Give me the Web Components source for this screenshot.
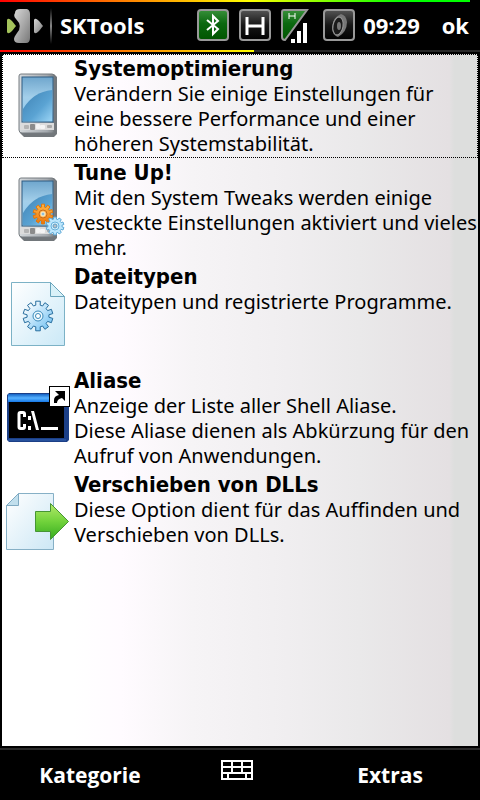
<!DOCTYPE html>
<html lang="de">
<head>
<meta charset="utf-8">
<meta name="viewport" content="width=device-width, initial-scale=1">
<title>SKTools</title>
<style>
html,body{margin:0;height:100%;background:#000}
body{font-family:"Noto Sans",sans-serif}
</style>
</head>
<body>
<sk-app>
  <sk-status slot="top" heading="SKTools" time="09:29"></sk-status>
  <sk-entry icon="pda" selected>
    <span slot="title">Systemoptimierung</span>Verändern Sie einige Einstellungen für<br>eine bessere Performance und einer<br>höheren Systemstabilität.
  </sk-entry>
  <sk-entry icon="tune">
    <span slot="title">Tune Up!</span>Mit den System Tweaks werden einige<br>vesteckte Einstellungen aktiviert und vieles<br>mehr.
  </sk-entry>
  <sk-entry icon="types">
    <span slot="title">Dateitypen</span>Dateitypen und registrierte Programme.
  </sk-entry>
  <sk-entry icon="alias">
    <span slot="title">Aliase</span>Anzeige der Liste aller Shell Aliase.<br>Diese Aliase dienen als Abkürzung für den<br>Aufruf von Anwendungen.
  </sk-entry>
  <sk-entry icon="move">
    <span slot="title">Verschieben von DLLs</span>Diese Option dient für das Auffinden und<br>Verschieben von DLLs.
  </sk-entry>
  <sk-softkeys slot="bottom"><span slot="left">Kategorie</span><span slot="right">Extras</span></sk-softkeys>
</sk-app>
<script>
function gear(cx, cy, outer, inner, teeth) {
  const p = [], step = Math.PI * 2 / teeth;
  for (let i = 0; i < teeth; i++) {
    const a = i * step - Math.PI / 2;
    for (const [r, o] of [[inner, -.32], [outer, -.24], [outer, .24], [inner, .32]])
      p.push((cx + r * Math.cos(a + o * step)).toFixed(1) + ' ' + (cy + r * Math.sin(a + o * step)).toFixed(1));
  }
  return 'M' + p.join('L') + 'Z';
}
const device = dy => `
  <defs>
    <linearGradient id="scr" x1="0" y1="0" x2="0" y2="1"><stop offset="0" stop-color="#6fa6cd"/><stop offset=".45" stop-color="#a3cfea"/><stop offset="1" stop-color="#8ecbf0"/></linearGradient>
    <linearGradient id="wave" x1="0" y1="0" x2="1" y2="1"><stop offset="0" stop-color="#3f82b4"/><stop offset=".6" stop-color="#5aa3d3"/><stop offset="1" stop-color="#9ad4f5"/></linearGradient>
    <linearGradient id="case" x1="0" y1="0" x2="1" y2="0"><stop offset="0" stop-color="#d5d9dc"/><stop offset=".8" stop-color="#a4a9ae"/><stop offset="1" stop-color="#7f8488"/></linearGradient>
    <linearGradient id="og" x1="0" y1="0" x2="0" y2="1"><stop offset="0" stop-color="#ffb84a"/><stop offset="1" stop-color="#ef7408"/></linearGradient>
  </defs>
  <g transform="translate(0 ${dy})">
  <path d="M22 74H54L57 77V134L54 137H24L20 133V76Z" fill="#72777b"/>
  <path d="M21 74H52Q54 74 54 76V131Q54 133 52 133H22Q19 133 19 130V76Q19 74 21 74Z" fill="url(#case)" stroke="#777d81"/>
  <rect x="22" y="77" width="31" height="45" fill="url(#scr)" stroke="#2e5c82"/>
  <path d="M23 109Q33 92 52 90V121H23Z" fill="url(#wave)"/>
  <path d="M20 123H54V130H20Z" fill="#dcdcdc"/>
  <rect x="24" y="125" width="5" height="4" rx="1" fill="#b4b4b4"/><rect x="30" y="124" width="5" height="6" rx="1" fill="#8b8b8b"/><rect x="36" y="124" width="4" height="5" rx="1" fill="#f4f4f4"/><rect x="40" y="125" width="5" height="4" rx="1" fill="#f4f4f4"/><rect x="47" y="125" width="5" height="3" rx="1" fill="#a9a9a9"/>
  </g>`;
const ART = {
  pda: [54, device(0)],
  tune: [158, device(104) + `
    <path d="${gear(43, 214, 10, 7, 10)}" fill="url(#og)" stroke="#dd780f"/><circle cx="43" cy="214" r="4" fill="#ffb95a" stroke="#c96b19"/><circle cx="43" cy="214" r="2" fill="#8fbfda" stroke="#fff0cf"/>
    <path d="${gear(55, 226, 9, 7, 10)}" fill="#bce6fc" stroke="#5fa9d6"/><circle cx="55" cy="226" r="4" fill="#d6f1fe" stroke="#68b2dc"/><circle cx="55" cy="226" r="2" fill="#b9bfc4" stroke="#5b9fc8"/>`],
  types: [262, `
    <defs><linearGradient id="pg" x1="0" y1="0" x2="1" y2="1"><stop offset="0" stop-color="#fff"/><stop offset="1" stop-color="#cbe9f7"/></linearGradient><linearGradient id="gg" x1="0" y1="0" x2="1" y2="1"><stop offset=".1" stop-color="#fff"/><stop offset="1" stop-color="#66bdf2"/></linearGradient></defs>
    <path d="M11.500 282.500H50.500L64.500 296.500V345.500H11.500Z" fill="url(#pg)" stroke="#7cb2c6"/>
    <path d="M50.500 282.500V296.500H64.500Z" fill="#d9f1f8" stroke="#6aa5bc"/>
    <path d="${gear(38, 316, 15, 11, 10)}" fill="url(#gg)" stroke="#286e9e"/>
    <circle cx="38" cy="316" r="5" fill="#eefaff" stroke="#3989b9"/><circle cx="38" cy="316" r="2.500" fill="#fff" stroke="#3989b9"/>`],
  alias: [366, `
    <defs><linearGradient id="bar" x1="0" y1="0" x2="0" y2="1"><stop offset="0" stop-color="#1462c4"/><stop offset=".5" stop-color="#56b2ff"/><stop offset="1" stop-color="#1678e8"/></linearGradient></defs>
    <path d="M9 393H67Q69 394 69 396V440L67 442H9L7 440V395Z" fill="#1b3f87"/>
    <rect x="8" y="394" width="59" height="8" fill="url(#bar)"/>
    <rect x="9" y="402" width="55" height="36" fill="#000"/><path d="M8 440H66" stroke="#3565b2"/>
    <path d="M24.500 417V414Q24.500 412.500 23 412.500H20.500Q19 412.500 19 414V427Q19 428.500 20.500 428.500H23Q24.500 428.500 24.500 427V424" fill="none" stroke="#fff" stroke-width="3"/>
    <path d="M28 416H31V420H28ZM28 426H31V430H28ZM31 411H34L39 430H36ZM41 427H58V430H41Z" fill="#fff"/>
    <rect x="49.500" y="386.500" width="20" height="20" fill="#fff" stroke="#000"/>
    <path d="M55 391H65V401L62 398Q57 399 57 403H54V400Q54 396 59 395Z" fill="#000"/>`],
  move: [470, `
    <defs><linearGradient id="pg" x1="0" y1="0" x2="1" y2="1"><stop offset="0" stop-color="#fff"/><stop offset="1" stop-color="#cce7f5"/></linearGradient><linearGradient id="gr" x1="0" y1="0" x2="0" y2="1"><stop offset="0" stop-color="#b4e96a"/><stop offset=".5" stop-color="#71d23b"/><stop offset="1" stop-color="#35ab20"/></linearGradient></defs>
    <path d="M6.500 505.500L18.500 493.500H53.500V549.500H6.500Z" fill="url(#pg)" stroke="#86b0c6"/>
    <path d="M18.500 493.500V505.500H6.500Z" fill="#c1dfed" stroke="#7faac2"/>
    <path d="M35.500 511.500H50.500V503.500L68.500 521.500L50.500 539.500V531.500H35.500Z" fill="url(#gr)" stroke="#469534"/>`]
};
const define = (name, html, setup) => customElements.define(name, class extends HTMLElement {
  constructor() { super(); this.attachShadow({ mode: 'open' }).innerHTML = html; }
  connectedCallback() { if (setup) setup(this, this.shadowRoot); }
});

define('sk-app', `<style>
:host{display:flex;flex-direction:column;min-height:100vh;background:#000}
main{flex:1;margin:2px 2px 0;background:linear-gradient(90deg,#fff 0,#fff 15%,#fffbff 25%,#f6f4f6 40%,#f0eef0 60%,#eae9ea 75%,#e4e0e2 94%,#dddedd 95%,#dddedd 100%)}
</style><slot name="top"></slot><main><slot></slot></main><slot name="bottom"></slot>`);

define('sk-status', `<style>
:host{display:block;color:#fff;font:bold 22px/28px "Open Sans","Noto Sans",sans-serif}
.line{height:2px;background:linear-gradient(90deg,red 0,#ff0 53%,#0f0 86%,#0f0 100%);margin-right:10px}
.low{margin:0;background:linear-gradient(90deg,red 0,#ff0 100%) 0/53% 100% no-repeat #292929}
header{display:flex;align-items:center;height:48px}
h1{font:inherit;margin:0 0 0 6px;padding-bottom:2px;flex:1}
svg{display:block}
.tray{display:flex;gap:10px}
time{margin-left:8px;padding-bottom:2px}
button{all:unset;margin:0 11px 0 22px;padding-bottom:2px;cursor:pointer}
</style>
<div class="line"></div>
<header>
<svg width="54" height="48" viewBox="0 2 54 48" aria-hidden="true"><defs><linearGradient id="s" x1="0" y1="0" x2="1" y2="1"><stop offset="0" stop-color="#d7d7d7"/><stop offset=".5" stop-color="#aaa"/><stop offset="1" stop-color="#777"/></linearGradient><linearGradient id="v" x1="0" y1="0" x2="0" y2="1"><stop offset="0" stop-color="#000"/><stop offset=".5" stop-color="#888"/><stop offset="1" stop-color="#000"/></linearGradient></defs>
<path d="M7 20Q8 17 12 21L16 26L12 31Q8 35 7 32Z" fill="#a4c35b"/><path d="M15 13Q15 9 20 9H27Q30 10 30 14V38Q30 43 26 43H19Q14 43 14 39Q14 37 17 33Q23 26 16 19Q13 16 15 13Z" fill="url(#s)"/><path d="M34 20Q35 17 39 21L43 26L39 31Q35 35 34 32Z" fill="url(#s)"/><rect x="50" y="8" width="2" height="36" fill="url(#v)"/></svg>
<h1></h1>
<div class="tray">
<svg width="32" height="32" viewBox="0 0 32 32" role="img" aria-label="Bluetooth"><defs><linearGradient id="g" x1="0" y1="0" x2="0" y2="1"><stop offset="0" stop-color="#38903a"/><stop offset=".45" stop-color="#0b6810"/><stop offset="1" stop-color="#005500"/></linearGradient></defs><rect x="1" y="1" width="30" height="30" rx="3" fill="url(#g)" stroke="#999" stroke-width="2"/><path d="M10 11L21 20L16 25V7L21 12L10 21" fill="none" stroke="#fff" stroke-width="2"/></svg>
<svg width="32" height="32" viewBox="0 0 32 32" role="img" aria-label="HSDPA"><defs><linearGradient id="b" x1="0" y1="0" x2="0" y2="1"><stop offset="0" stop-color="#555"/><stop offset=".5" stop-color="#171717"/><stop offset="1" stop-color="#000"/></linearGradient></defs><rect x="1" y="1" width="30" height="30" rx="3" fill="url(#b)" stroke="#999" stroke-width="2"/><path d="M8 8V26M24 8V26M8 17H24" fill="none" stroke="#fff" stroke-width="3"/></svg>
<svg width="32" height="34" viewBox="0 0 32 34" role="img" aria-label="Signal"><defs><linearGradient id="g" x1="0" y1="0" x2="0" y2="1"><stop offset="0" stop-color="#38983a"/><stop offset="1" stop-color="#006000"/></linearGradient></defs><path d="M3 1H26L4 31Q1 31 1 28V3Q1 1 3 1Z" fill="url(#g)" stroke="#999" stroke-width="2"/><path d="M8 4V10M14 4V10M8 7H14" stroke="#fff" stroke-width="1"/><path d="M10 30H14V34H10ZM16 22H20V34H16ZM22 14H26V34H22Z" fill="#fff"/></svg>
<svg width="32" height="32" viewBox="0 0 32 32" role="img" aria-label="Lautsprecher"><defs><linearGradient id="b" x1="0" y1="0" x2="0" y2="1"><stop offset="0" stop-color="#505050"/><stop offset=".5" stop-color="#191919"/><stop offset="1" stop-color="#000"/></linearGradient></defs><rect x="1" y="1" width="30" height="30" rx="3" fill="url(#b)" stroke="#999" stroke-width="2"/><path d="M18 5Q23 6 24 13Q24 23 15 28Q9 26 9 18Q10 8 18 5Z" fill="#777"/><ellipse cx="15" cy="17" rx="5" ry="9" fill="#1b1b1b" stroke="#999" transform="rotate(10 15 17)"/><ellipse cx="16" cy="17" rx="2" ry="4" fill="#777"/></svg>
</div>
<time></time><button type="button">ok</button>
</header>
<div class="line low"></div>`, (el, root) => {
  root.querySelector('h1').textContent = el.getAttribute('heading');
  root.querySelector('time').textContent = el.getAttribute('time');
});

define('sk-entry', `<style>
:host{display:block;color:#000;font-size:20px;line-height:25px}
button{all:unset;box-sizing:border-box;display:grid;grid-template-columns:72px 1fr;width:100%;min-height:104px;position:relative;cursor:pointer}
:host([selected]) button::after{content:"";position:absolute;inset:0;border:1px dotted #000}
svg{display:block}
.text{padding:2px 0;white-space:nowrap}
strong{display:block;font:bold 22px/25px "DejaVu Sans Condensed","DejaVu Sans",sans-serif}
</style><button type="button"><svg width="72" height="104" aria-hidden="true"></svg><span class="text"><strong><slot name="title"></slot></strong><slot></slot></span></button>`, (el, root) => {
  const [y, art] = ART[el.getAttribute('icon')];
  const svg = root.querySelector('svg');
  svg.setAttribute('viewBox', `2 ${y} 72 104`);
  svg.innerHTML = art;
});

define('sk-softkeys', `<style>
:host{display:block;margin-top:2px;border-top:2px solid #292929;color:#fff;font:bold 21px/46px "Open Sans","Noto Sans",sans-serif}
nav{display:grid;grid-template-columns:3fr 2fr 3fr;height:50px}
button{all:unset;text-align:center;cursor:pointer}
.kb{display:flex;justify-content:center;align-items:flex-start;padding:10px 6px 0 0}
svg{display:block}
</style><nav><button type="button"><slot name="left"></slot></button>
<button type="button" class="kb" aria-label="Tastatur"><svg width="32" height="20" viewBox="0 0 32 20"><path d="M1 1H31V19H1ZM1 7H31M1 13H31M11 1V13M21 1V13M7 13V19M25 13V19" fill="none" stroke="#fff" stroke-width="2"/></svg></button>
<button type="button"><slot name="right"></slot></button></nav>`);
</script>
</body>
</html>
